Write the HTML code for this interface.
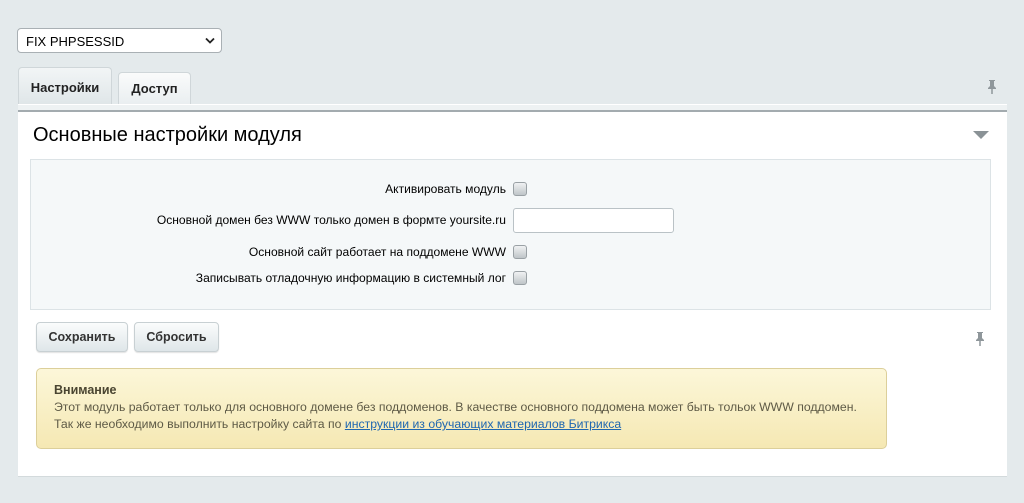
<!DOCTYPE html>
<html><head><meta charset="utf-8"><style>
*{box-sizing:border-box;margin:0;padding:0}
body{width:1024px;height:503px;background:#e4eaec;font-family:"Liberation Sans",Arial,sans-serif;font-size:13px;color:#000;position:relative;overflow:hidden}
.sel{position:absolute;left:17px;top:28px;width:205px;height:25px;background:#fff;border:1px solid #a9b0b4;border-radius:4px;font-size:13px;padding:5px 0 0 8px;color:#000}
.sel svg{position:absolute;right:6px;top:8px}
.tab{position:absolute;font-weight:bold;font-size:13px;color:#222;text-align:center;border:1px solid #cfd6d9;border-bottom:none;border-radius:4px 4px 0 0}
.t1{left:18px;top:67px;width:94px;height:38px;background:linear-gradient(#f2f5f6,#dfe6e8);padding-top:12px}
.t2{left:118px;top:72px;width:73px;height:33px;background:linear-gradient(#fafbfb,#e9eef0);padding-top:8px}
.bar{position:absolute;left:18px;top:104px;width:989px;height:8px;background:#eef2f3;border-top:1px solid #fff;border-bottom:2px solid #a3abaf}
.panel{position:absolute;left:18px;top:111px;width:989px;height:366px;background:#fff;border-bottom:1px solid #d3dadc}
h1{position:absolute;left:33px;top:124px;font-weight:normal;font-size:20px;color:#000}
.tri{position:absolute;left:973px;top:131px;width:0;height:0;border-left:8px solid transparent;border-right:8px solid transparent;border-top:8px solid #8a9296}
.box{position:absolute;left:30px;top:159px;width:961px;height:151px;background:#f5f8f9;border:1px solid #dce3e6}
.lbl{position:absolute;right:518px;font-size:12.05px;color:#000;white-space:nowrap}
.cb{position:absolute;left:513px;width:14px;height:14px;border:1px solid #9aa1a5;border-radius:3px;background:linear-gradient(#f0f2f3,#bfc5c8)}
.inp{position:absolute;left:513px;top:208px;width:161px;height:25px;background:#fff;border:1px solid #bac2c6;border-radius:3px}
.btn{position:absolute;top:322px;height:30px;border:1px solid #c8d0d3;border-radius:4px;background:linear-gradient(#fbfcfc,#dfe6e9);font-weight:bold;color:#333;font-size:12.5px;text-align:center;padding-top:7px;box-shadow:0 1px 1px rgba(0,0,0,.12)}
.note{position:absolute;left:36px;top:368px;width:851px;height:81px;border:1px solid #dccf9a;border-radius:5px;background:linear-gradient(#fcf7d9,#f5e8b3);padding:13px 0 0 17px;font-size:12.25px;line-height:17px;color:#5e5a46}
.note b{color:#4a4531;font-size:12.5px}
.note a{color:#2067b0;text-decoration:underline}
.pin{position:absolute}
</style></head><body>
<div class="sel">FIX PHPSESSID<svg width="10" height="7" viewBox="0 0 10 7"><path d="M1 1.5l4 4 4-4" fill="none" stroke="#222" stroke-width="1.8"/></svg></div>
<div class="tab t1">Настройки</div>
<div class="tab t2">Доступ</div>
<svg class="pin" style="left:986px;top:79px" width="12" height="16" viewBox="0 0 12 16"><path d="M3 1h6v1H8v5l2 2v1H2V9l2-2V2H3z" fill="#8f979b"/><path d="M6 10v5" stroke="#8f979b" stroke-width="1.5"/></svg>
<div class="panel"></div>
<div class="bar"></div>
<h1>Основные настройки модуля</h1>
<div class="tri"></div>
<div class="box"></div>
<div class="lbl" style="top:182px">Активировать модуль</div><div class="cb" style="top:182px"></div>
<div class="lbl" style="top:213px">Основной домен без WWW только домен в формте yoursite.ru</div><div class="inp"></div>
<div class="lbl" style="top:245px">Основной сайт работает на поддомене WWW</div><div class="cb" style="top:245px"></div>
<div class="lbl" style="top:271px">Записывать отладочную информацию в системный лог</div><div class="cb" style="top:271px"></div>
<div class="btn" style="left:36px;width:92px">Сохранить</div>
<div class="btn" style="left:134px;width:85px">Сбросить</div>
<svg class="pin" style="left:974px;top:331px" width="12" height="16" viewBox="0 0 12 16"><path d="M3 1h6v1H8v5l2 2v1H2V9l2-2V2H3z" fill="#8f979b"/><path d="M6 10v5" stroke="#8f979b" stroke-width="1.5"/></svg>
<div class="note"><b>Внимание</b><br>Этот модуль работает только для основного домене без поддоменов. В качестве основного поддомена может быть тольок WWW поддомен.<br>Так же необходимо выполнить настройку сайта по <a>инструкции из обучающих материалов Битрикса</a></div>
</body></html>
